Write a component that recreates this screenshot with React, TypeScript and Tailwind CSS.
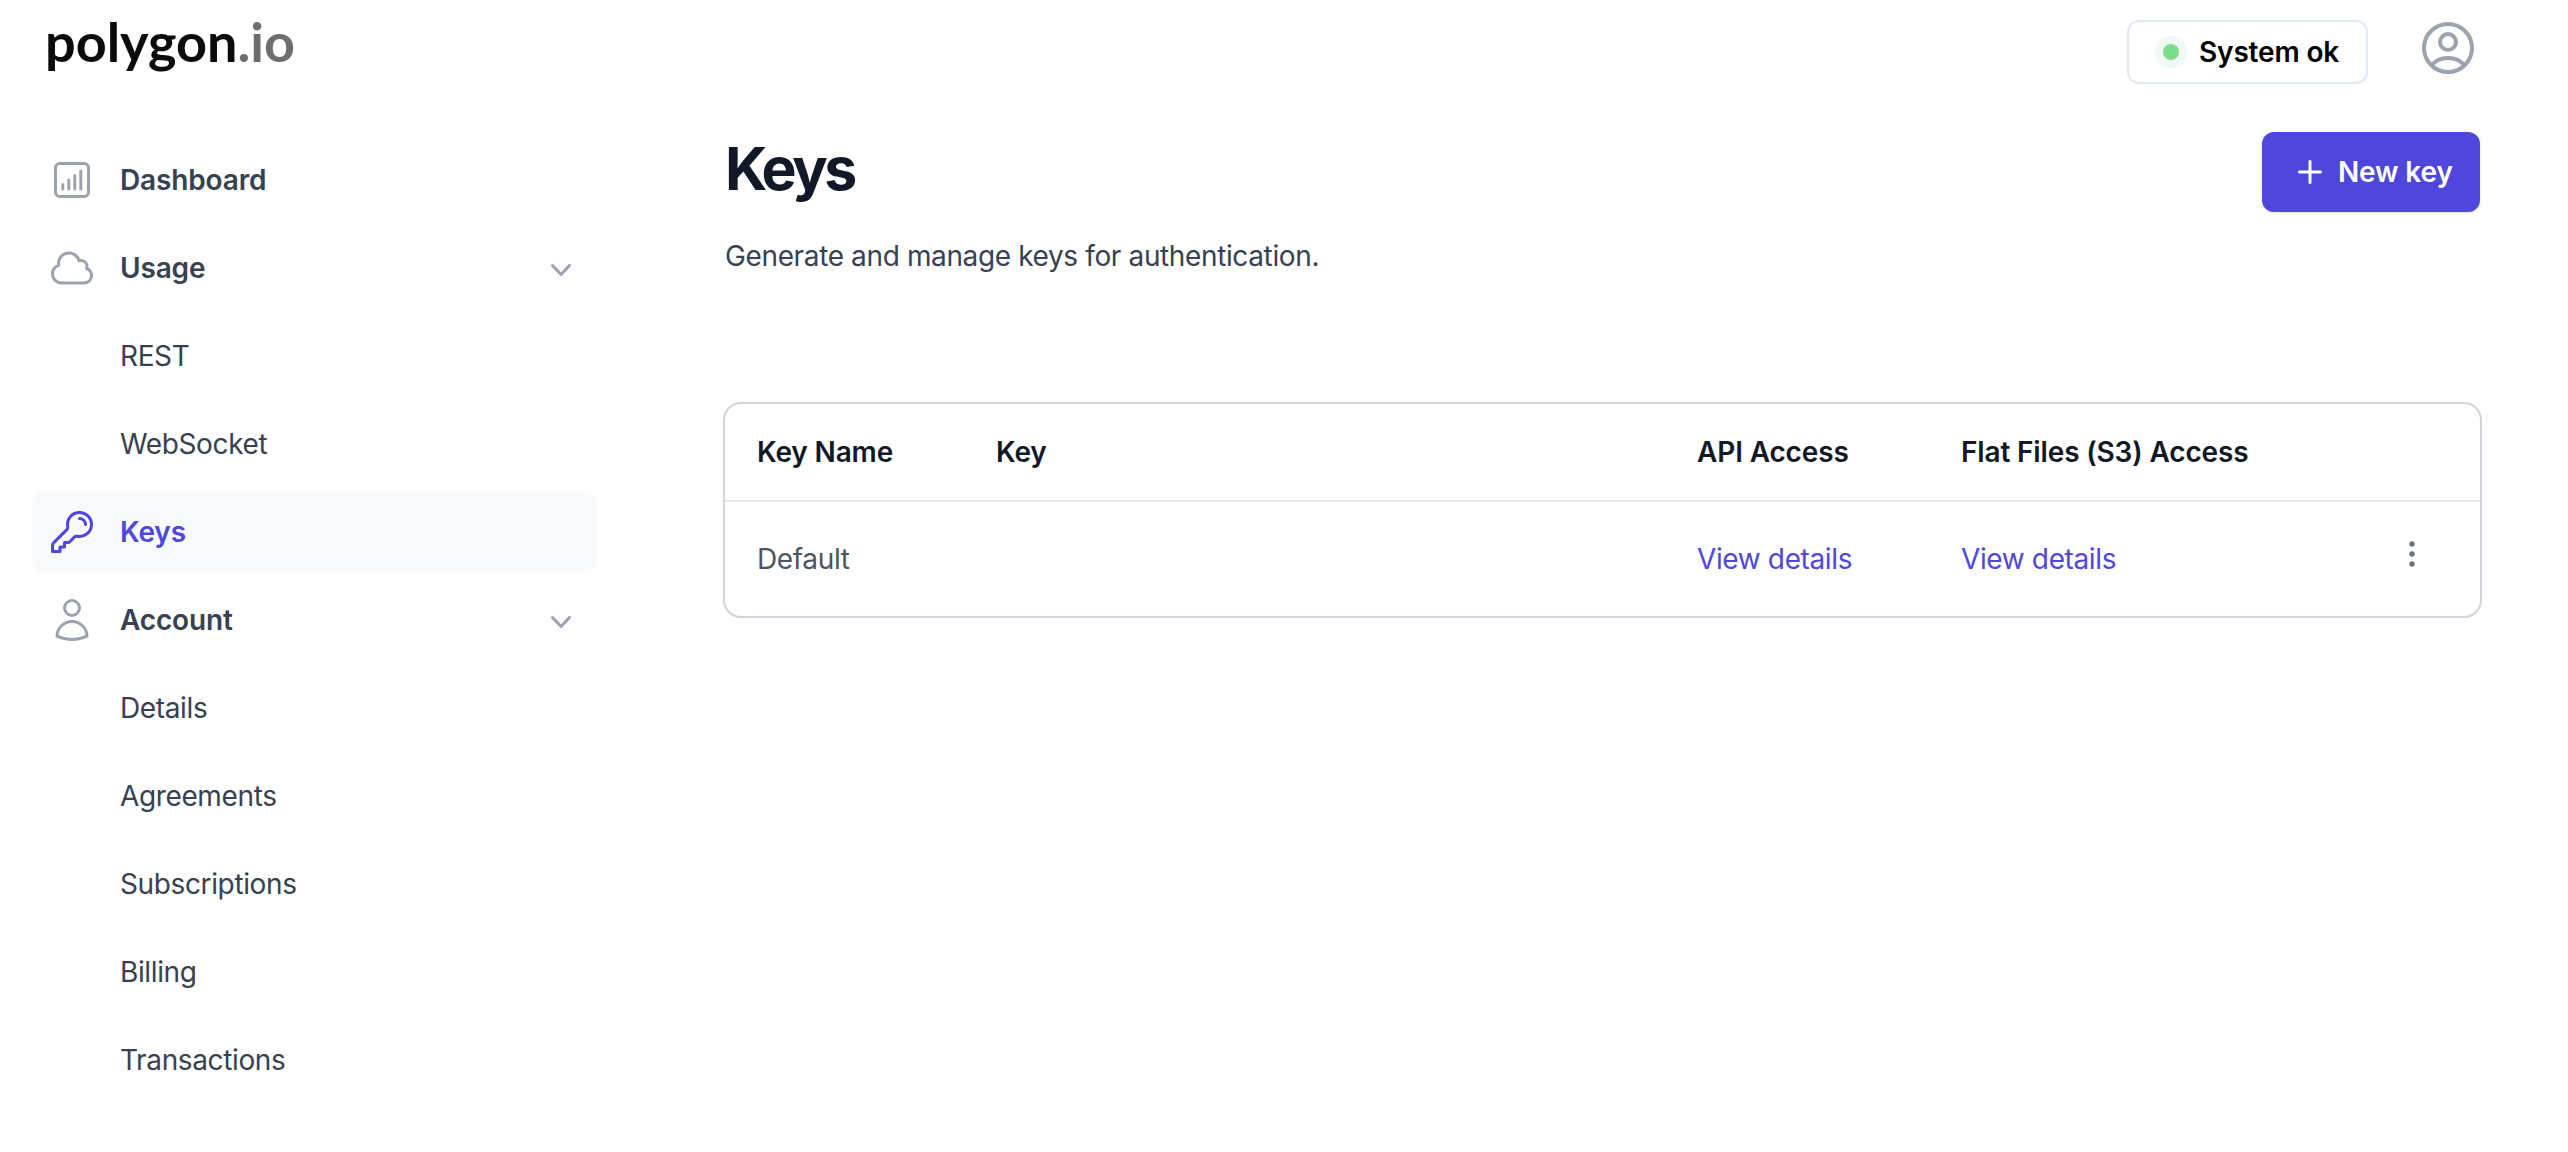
import type { ReactNode } from "react";

function OutlineIcon({ children }: { children: ReactNode }) {
  return (
    <svg
      className="size-12"
      viewBox="0 0 24 24"
      fill="none"
      stroke="currentColor"
      strokeWidth={1.5}
      strokeLinecap="round"
      strokeLinejoin="round"
    >
      {children}
    </svg>
  );
}

function DashboardIcon() {
  return (
    <OutlineIcon>
      <rect x="3.75" y="3.75" width="16.5" height="16.5" rx="2.1" />
      <path d="M7.400 14.250v2.250M10.400 12v4.500M13.400 9.750v6.750M16.400 7.500v9" />
    </OutlineIcon>
  );
}

function CloudIcon() {
  return (
    <OutlineIcon>
      <path d="M2.250 15a4.500 4.500 0 0 0 4.500 4.500H18a3.750 3.750 0 0 0 1.332-7.257 3 3 0 0 0-3.758-3.848 5.250 5.250 0 0 0-10.233 2.330A4.502 4.502 0 0 0 2.250 15Z" />
    </OutlineIcon>
  );
}

function KeyIcon() {
  return (
    <OutlineIcon>
      <path d="M15.750 5.250a3 3 0 0 1 3 3m3 0a6 6 0 0 1-7.029 5.912c-.563-.097-1.159.026-1.563.430L10.500 17.250H8.250v2.250H6v2.250H2.250v-2.818c0-.597.237-1.170.659-1.591l6.499-6.499c.404-.404.527-1 .430-1.563A6 6 0 1 1 21.750 8.250Z" />
    </OutlineIcon>
  );
}

function UserIcon() {
  return (
    <OutlineIcon>
      <path d="M15.750 6a3.750 3.750 0 1 1-7.500 0 3.750 3.750 0 0 1 7.500 0ZM4.501 20.118a7.500 7.500 0 0 1 14.998 0A17.933 17.933 0 0 1 12 21.750c-2.676 0-5.216-.584-7.499-1.632Z" />
    </OutlineIcon>
  );
}

function Chevron() {
  return (
    <svg className="mt-[3px]" width="40" height="40" viewBox="0 0 20 20" fill="currentColor">
      <path
        fillRule="evenodd"
        d="M5.230 7.210a.75.75 0 0 1 1.060.020L10 11.168l3.710-3.938a.75.75 0 1 1 1.080 1.040l-4.250 4.500a.75.75 0 0 1-1.080 0l-4.250-4.500a.75.75 0 0 1 .020-1.060z"
      />
    </svg>
  );
}

function Item({
  icon,
  label,
  open,
  active,
}: {
  icon?: ReactNode;
  label: string;
  open?: boolean;
  active?: boolean;
}) {
  return (
    <a
      className={
        "flex h-20 items-center rounded-xl px-4 text-[28px] " +
        (active ? "bg-[#f9fafc] text-[#4f46dc] " : "text-[#374151] ") +
        (icon ? "font-semibold tracking-[-0.15px]" : "font-normal tracking-[-0.37px]")
      }
    >
      <span className={"mr-6 size-12 " + (active ? "text-[#4f46dc]" : "text-[#9ca3af]")}>
        {icon}
      </span>
      <span className="flex-1">{label}</span>
      {open && (
        <span className="text-[#9ca3af]">
          <Chevron />
        </span>
      )}
    </a>
  );
}

const columns = "grid grid-cols-[239px_701px_264px_405px_1fr] items-center pl-8";

export default function App() {
  return (
    <div className="flex h-[1152px] w-[2568px] flex-col overflow-hidden bg-white font-['Inter',sans-serif]">
      <header className="flex h-[132px] items-start justify-between pl-[45px] pr-[94px]">
        <div className="mt-1.5 font-['Lato',sans-serif] text-[54px] leading-[72px] font-bold text-[#0b0b0b]">
          polygon<span className="text-[#6e6e6e]">.io</span>
        </div>
        <div className="mt-5 flex items-start">
          <div className="mr-[54px] flex h-16 w-[241px] items-center rounded-xl border-2 border-[#e2e8f0] pl-[26px] text-[28px] font-semibold tracking-[-0.15px] text-black">
            <span className="mr-3 flex size-8 items-center justify-center rounded-full bg-[#f0faf3]">
              <span className="size-4 rounded-full bg-[#7bdc8b]" />
            </span>
            System ok
          </div>
          <svg
            className="mt-[2px] text-[#9ca3af]"
            width="52"
            height="52"
            viewBox="0 0 52 52"
            fill="none"
            stroke="currentColor"
            strokeWidth="4"
          >
            <circle cx="26" cy="26" r="24" />
            <circle cx="26" cy="20" r="8" />
            <path d="M10 43c3.500-4.500 9.500-7 16-7s12.500 2.500 16 7" />
          </svg>
        </div>
      </header>
      <div className="flex flex-1">
        <nav className="ml-8 flex w-[565px] flex-col gap-2 pt-2">
          <Item icon={<DashboardIcon />} label="Dashboard" />
          <Item icon={<CloudIcon />} label="Usage" open />
          <Item label="REST" />
          <Item label="WebSocket" />
          <Item icon={<KeyIcon />} label="Keys" active />
          <Item icon={<UserIcon />} label="Account" open />
          <Item label="Details" />
          <Item label="Agreements" />
          <Item label="Subscriptions" />
          <Item label="Billing" />
          <Item label="Transactions" />
        </nav>
        <main className="ml-[126px] w-[1759px]">
          <div className="flex h-[270px] items-start justify-between pr-[2px] pl-[2px]">
            <div>
              <h1 className="-mt-px text-[59px] leading-[76px] font-bold tracking-[-3.5px] text-[#111827]">
                Keys
              </h1>
              <p className="mt-[29px] text-[28px] leading-10 tracking-[-0.37px] text-[#374151]">
                Generate and manage keys for authentication.
              </p>
            </div>
            <button className="flex h-20 w-[218px] items-center rounded-xl bg-[#4f46dc] pl-9 text-[28px] font-semibold tracking-[-0.15px] text-white shadow-sm">
              <svg className="mr-4" width="24" height="24" viewBox="0 0 24 24" stroke="currentColor" strokeWidth="3" strokeLinecap="round">
                <path d="M12 1.500v21M1.500 12h21" />
              </svg>
              New key
            </button>
          </div>
          <section className="h-[216px] rounded-[18px] border-2 border-[#d1d5db] text-[28px]">
            <div className={columns + " h-[98px] border-b-2 border-[#e5e7eb] font-semibold tracking-[-0.15px] text-[#111827]"}>
              <span>Key Name</span>
              <span>Key</span>
              <span>API Access</span>
              <span>Flat Files (S3) Access</span>
            </div>
            <div className={columns + " h-[114px] tracking-[-0.37px] text-[#4f46dc]"}>
              <span className="text-[#4b5563]">Default</span>
              <span />
              <a>View details</a>
              <a>View details</a>
              <svg className="mb-[10px] ml-[42px] text-[#6b7280]" width="8" height="28" viewBox="0 0 8 28" fill="currentColor">
                <circle cx="4" cy="4" r="2.700" />
                <circle cx="4" cy="14" r="2.700" />
                <circle cx="4" cy="24" r="2.700" />
              </svg>
            </div>
          </section>
        </main>
      </div>
    </div>
  );
}
